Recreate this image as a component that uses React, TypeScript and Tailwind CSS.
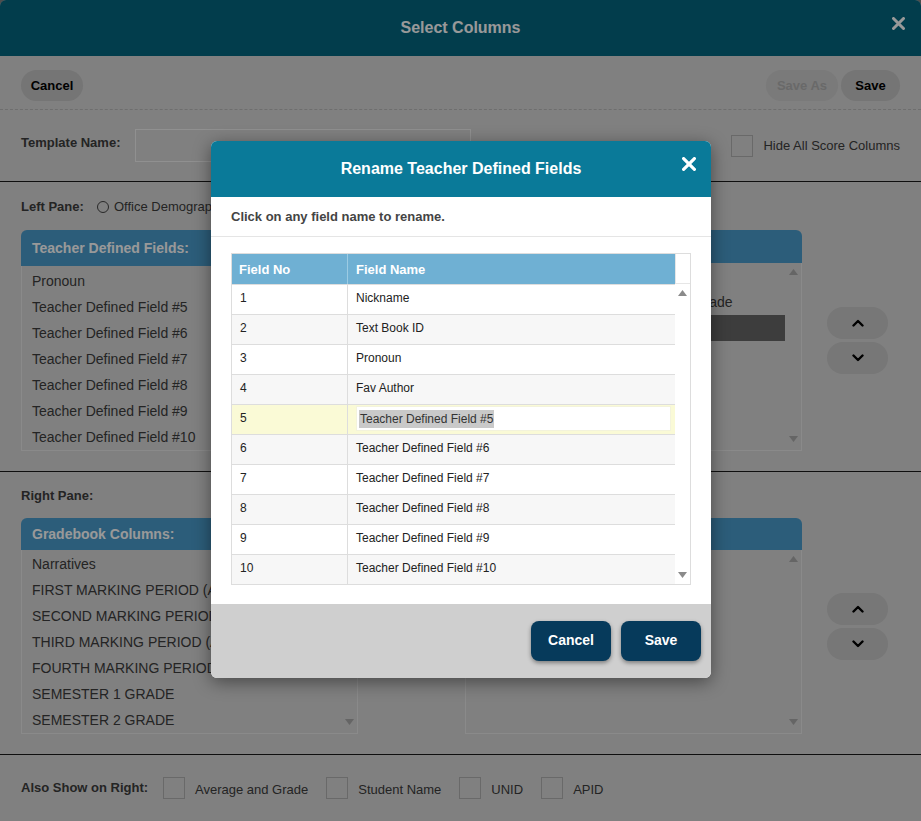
import { ReactNode } from 'react'

const leftTeacherFields = [
  'Pronoun',
  'Teacher Defined Field #5',
  'Teacher Defined Field #6',
  'Teacher Defined Field #7',
  'Teacher Defined Field #8',
  'Teacher Defined Field #9',
  'Teacher Defined Field #10',
]

const rightTeacherFields = ['Nickname', 'Cumulative Average and Midterms Grade', 'Text Book ID']

const gradebookColumns = [
  'Narratives',
  'FIRST MARKING PERIOD (A)',
  'SECOND MARKING PERIOD (A)',
  'THIRD MARKING PERIOD (A)',
  'FOURTH MARKING PERIOD (A)',
  'SEMESTER 1 GRADE',
  'SEMESTER 2 GRADE',
]

const fields = [
  'Nickname',
  'Text Book ID',
  'Pronoun',
  'Fav Author',
  'Teacher Defined Field #5',
  'Teacher Defined Field #6',
  'Teacher Defined Field #7',
  'Teacher Defined Field #8',
  'Teacher Defined Field #9',
  'Teacher Defined Field #10',
]

function Triangle({ up, className }: { up?: boolean; className?: string }) {
  return (
    <svg width="9" height="6" viewBox="0 0 9 6" className={className}>
      <polygon points={up ? '0,6 4.5,0 9,6' : '0,0 9,0 4.5,6'} fill="currentColor" />
    </svg>
  )
}

function Chevron({ up }: { up?: boolean }) {
  return (
    <svg width="12" height="8" viewBox="0 0 12 8">
      <polyline
        points={up ? '1.5,6.5 6,2 10.5,6.5' : '1.5,1.5 6,6 10.5,1.5'}
        fill="none"
        stroke="#000"
        strokeWidth="2.4"
        strokeLinecap="round"
        strokeLinejoin="round"
      />
    </svg>
  )
}

function MoveButtons() {
  return (
    <div className="flex flex-col gap-[3px]">
      <button className="w-[61px] h-[32px] rounded-full bg-[#c6c6c6] flex items-center justify-center">
        <Chevron up />
      </button>
      <button className="w-[61px] h-[32px] rounded-full bg-[#c6c6c6] flex items-center justify-center">
        <Chevron />
      </button>
    </div>
  )
}

function ListPanel({ title, items, height, headerH, selected, topPad }: {
  title?: string
  items: string[]
  height: string
  headerH: string
  selected?: number
  topPad: string
}) {
  return (
    <div className={`w-[337px] ${height} flex flex-col`}>
      <div className={`${headerH} rounded-t-md bg-[#4a9bcb] flex items-center px-[11px] text-[14px] font-bold text-white`}>
        {title}
      </div>
      <div className="flex-1 border border-t-0 border-[#e6e6e6] flex">
        <div className={`flex-1 ${topPad}`}>
          {items.map((item, i) => (
            <div
              key={item}
              className={`h-[26px] leading-[26px] px-[10px] text-[14px] whitespace-nowrap overflow-hidden ${
                i === selected ? 'bg-[#666] text-white' : 'text-[#3c3c3c]'
              }`}
            >
              {item}
            </div>
          ))}
        </div>
        <div className="w-[16px] flex flex-col items-center justify-between pt-[6px] pb-[8px] text-[#a8a8a8]">
          <Triangle up />
          <Triangle />
        </div>
      </div>
    </div>
  )
}

function Checkbox({ label }: { label: ReactNode }) {
  return (
    <div className="flex items-center">
      <span className="w-[22px] h-[22px] border border-[#b0b0b0] bg-[#d5d5d5]" />
      <span className="ml-[10px] text-[13px] text-[#3c3c3c] mt-[3px]">{label}</span>
    </div>
  )
}

function CloseX({ color, size = 13 }: { color: string; size?: number }) {
  return (
    <svg width={size} height={size} viewBox="0 0 13 13">
      <path d="M1.5 1.5 L11.5 11.5 M11.5 1.5 L1.5 11.5" stroke={color} strokeWidth="3" strokeLinecap="round" />
    </svg>
  )
}

export default function App() {
  return (
    <div className="relative w-[921px] h-[821px] overflow-hidden bg-[#808080] font-['Liberation_Sans',Arial,sans-serif]">
      {/* page behind the modal */}
      <div className="h-full rounded-t-md bg-[#d5d5d5] flex flex-col overflow-hidden">
        <div className="h-[56px] shrink-0 bg-[#04667f] relative flex items-center justify-center">
          <h1 className="text-[16px] font-bold text-white">Select Columns</h1>
          <span className="absolute right-[16px] top-[17px]">
            <CloseX color="#fff" />
          </span>
        </div>

        <div className="h-[54px] shrink-0 px-[21px] pt-[14px] flex items-start justify-between border-b border-dashed border-[#b8b8b8]">
          <button className="h-[31px] w-[62px] rounded-full bg-[#c3c3c3] text-[13px] font-bold text-black">Cancel</button>
          <div className="flex gap-[3px]">
            <button className="h-[31px] w-[72px] rounded-full bg-[#cbcbcb] text-[13px] font-bold text-[#b0b0b0]">Save As</button>
            <button className="h-[31px] w-[59px] rounded-full bg-[#c3c3c3] text-[13px] font-bold text-black">Save</button>
          </div>
        </div>

        <div className="h-[72px] shrink-0 px-[21px] flex items-center border-b border-[#1a1a1a]">
          <label className="w-[114px] mb-[5px] text-[13px] font-bold text-[#3c3c3c]">Template Name:</label>
          <div className="w-[336px] h-[33px] border border-[#f0f0f0] bg-[#d5d5d5]" />
          <div className="ml-auto flex items-center">
            <span className="w-[22px] h-[22px] border border-[#b0b0b0]" />
            <span className="ml-[10px] text-[13px] text-[#3c3c3c]">Hide All Score Columns</span>
          </div>
        </div>

        <div className="shrink-0 px-[21px] pt-[17px] pb-[20px] border-b border-[#1a1a1a]">
          <div className="flex items-center h-[16px] mb-[15px] text-[13px] text-[#3c3c3c]">
            <span className="font-bold w-[76px]">Left Pane:</span>
            <span className="w-[12px] h-[12px] rounded-full border border-[#444]" />
            <span className="ml-[5px] w-[330px]">Office Demographics</span>
            <span className="w-[12px] h-[12px] rounded-full border border-[#444]" />
            <span className="ml-[5px]">Teacher Defined Fields</span>
          </div>
          <div className="flex items-center">
            <ListPanel title="Teacher Defined Fields:" items={leftTeacherFields} height="h-[221px]" headerH="h-[36px]" topPad="pt-[2px]" />
            <div className="w-[107px]" />
            <ListPanel items={rightTeacherFields} height="h-[221px]" headerH="h-[33px]" selected={2} topPad="pt-0" />
            <div className="ml-[25px]">
              <MoveButtons />
            </div>
          </div>
        </div>

        <div className="shrink-0 px-[21px] pt-[14px] pb-[20px] border-b border-[#1a1a1a]">
          <div className="h-[16px] mb-[16px] text-[13px] font-bold text-[#3c3c3c]">Right Pane:</div>
          <div className="flex items-center">
            <ListPanel title="Gradebook Columns:" items={gradebookColumns} height="h-[216px]" headerH="h-[32px]" topPad="pt-[1px]" />
            <div className="w-[107px]" />
            <ListPanel items={[]} height="h-[216px]" headerH="h-[32px]" topPad="pt-0" />
            <div className="ml-[25px]">
              <MoveButtons />
            </div>
          </div>
        </div>

        <div className="flex-1 px-[21px] pt-[22px] flex items-start">
          <span className="text-[13px] font-bold text-[#3c3c3c] mt-[1px] w-[142px]">Also Show on Right:</span>
          <div className="flex gap-[18px]">
            <Checkbox label="Average and Grade" />
            <Checkbox label="Student Name" />
            <Checkbox label="UNID" />
            <Checkbox label="APID" />
          </div>
        </div>
      </div>

      {/* dim overlay */}
      <div className="absolute inset-0 bg-black/40" />

      {/* rename modal */}
      <div className="absolute left-[211px] top-[141px] w-[500px] rounded-md bg-white shadow-[0_4px_18px_rgba(0,0,0,0.45)] overflow-hidden">
        <div className="h-[56px] bg-[#0a7a99] relative flex items-center justify-center">
          <h2 className="text-[16px] font-bold text-white">Rename Teacher Defined Fields</h2>
          <span className="absolute right-[15px] top-[16px]">
            <CloseX color="#fff" size={14} />
          </span>
        </div>
        <div className="h-[40px] px-[20px] flex items-center border-b border-[#e5e5e5] text-[13px] font-bold text-[#444]">
          Click on any field name to rename.
        </div>
        <div className="px-[20px] pt-[16px] pb-[19px]">
          <div className="w-[460px] border border-[#dddddd] flex">
            <div className="w-[443px]">
              <div className="h-[30px] bg-[#6fb0d3] flex text-[13px] font-bold text-white">
                <div className="w-[116px] border-r border-[#9ccbe3] pl-[7px] pt-[1px] flex items-center">Field No</div>
                <div className="flex-1 pl-[8px] pt-[1px] flex items-center">Field Name</div>
              </div>
              {fields.map((name, i) => {
                const editing = i === 4
                const bg = editing ? 'bg-[#fafad6]' : i % 2 === 1 ? 'bg-[#f7f7f7]' : 'bg-white'
                return (
                  <div key={i} className={`h-[30px] border-t border-[#dddddd] flex text-[12px] text-[#222] ${bg}`}>
                    <div className="w-[116px] border-r border-[#dddddd] pl-[8px] pb-[3px] flex items-center">{i + 1}</div>
                    {editing ? (
                      <div className="flex-1 pl-[8px] pr-[4px] pt-[1px] pb-[3px] flex">
                        <div className="flex-1 bg-white border border-[#f3f3dc] flex items-center pl-[2px]">
                          <span className="bg-[#c9c9c9] text-[#333] px-[1px]">{name}</span>
                        </div>
                      </div>
                    ) : (
                      <div className="flex-1 pl-[8px] pb-[3px] flex items-center">{name}</div>
                    )}
                  </div>
                )
              })}
            </div>
            <div className="w-[15px] flex flex-col text-[#8a8a8a]">
              <div className="h-[30px] border-l border-b border-[#e6e6e6]" />
              <div className="flex-1 flex flex-col items-center justify-between pt-[6px] pb-[6px]">
                <Triangle up />
                <Triangle />
              </div>
            </div>
          </div>
        </div>
        <div className="h-[74px] bg-[#cfcfcf] flex items-start justify-end gap-[10px] pt-[17px] pr-[10px]">
          <button className="w-[80px] h-[40px] pb-[2px] rounded-lg bg-[#063a5b] text-white text-[14px] font-bold shadow-[0_2px_4px_rgba(0,0,0,0.4)]">Cancel</button>
          <button className="w-[80px] h-[40px] pb-[2px] rounded-lg bg-[#063a5b] text-white text-[14px] font-bold shadow-[0_2px_4px_rgba(0,0,0,0.4)]">Save</button>
        </div>
      </div>
    </div>
  )
}
